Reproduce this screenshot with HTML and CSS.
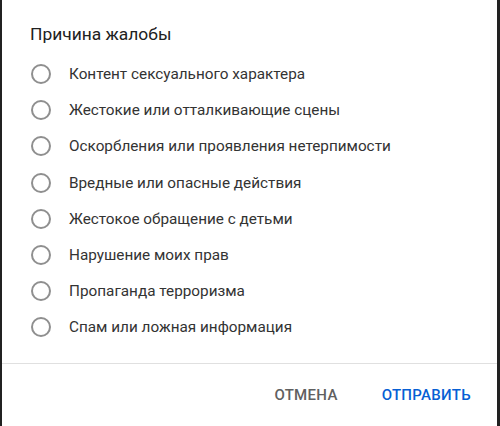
FILE: index.html
```html
<!DOCTYPE html>
<html lang="ru">
<head>
<meta charset="utf-8">
<link rel="stylesheet" href="styles.css">
</head>
<body>
<div class="dialog">
  <div class="content">
    <h2 class="title">Причина жалобы</h2>
    <ul class="options">
      <li class="option"><span class="radio"></span><span class="label">Контент сексуального характера</span></li>
      <li class="option"><span class="radio"></span><span class="label">Жестокие или отталкивающие сцены</span></li>
      <li class="option"><span class="radio"></span><span class="label">Оскорбления или проявления нетерпимости</span></li>
      <li class="option"><span class="radio"></span><span class="label">Вредные или опасные действия</span></li>
      <li class="option"><span class="radio"></span><span class="label">Жестокое обращение с детьми</span></li>
      <li class="option"><span class="radio"></span><span class="label">Нарушение моих прав</span></li>
      <li class="option"><span class="radio"></span><span class="label">Пропаганда терроризма</span></li>
      <li class="option"><span class="radio"></span><span class="label">Спам или ложная информация</span></li>
    </ul>
  </div>
  <div class="actions">
    <button class="btn btn-cancel">Отмена</button>
    <button class="btn btn-submit">Отправить</button>
  </div>
</div>
</body>
</html>
```

FILE: styles.css
```css
html, body {
  margin: 0;
  padding: 0;
  height: 100%;
}
body {
  background: #212121;
  font-family: Roboto, "Noto Sans", Arial, sans-serif;
  overflow: hidden;
}
.dialog {
  margin-left: 2px;
  width: 495px;
  height: 426px;
  background: #fff;
  display: flex;
  flex-direction: column;
}
.content {
  height: 364px;
  box-sizing: border-box;
  padding: 24px 0 0 28px;
  border-bottom: 1px solid #e0e0e0;
}
.title {
  margin: 0;
  font-size: 17.4px;
  font-weight: 400;
  line-height: 20px;
  color: #212121;
}
.options {
  list-style: none;
  margin: 12px 0 0;
  padding: 0;
}
.option {
  display: flex;
  align-items: center;
  height: 36.2px;
}
.radio {
  width: 16px;
  height: 16px;
  border: 2px solid #8f8f8f;
  border-radius: 50%;
  margin-left: 1px;
  flex-shrink: 0;
}
.label {
  margin-left: 18px;
  font-size: 15.3px;
  color: #333;
}
.actions {
  flex: 1;
  display: flex;
  justify-content: flex-end;
  align-items: center;
  gap: 12px;
  padding: 0 10px 0 0;
}
.btn {
  background: none;
  border: none;
  font-family: inherit;
  font-size: 15px;
  font-weight: 500;
  text-transform: uppercase;
  padding: 10px 16px;
  letter-spacing: 0.3px;
  cursor: pointer;
}
.btn-cancel { color: #606060; }
.btn-submit { color: #065fd4; }
```
